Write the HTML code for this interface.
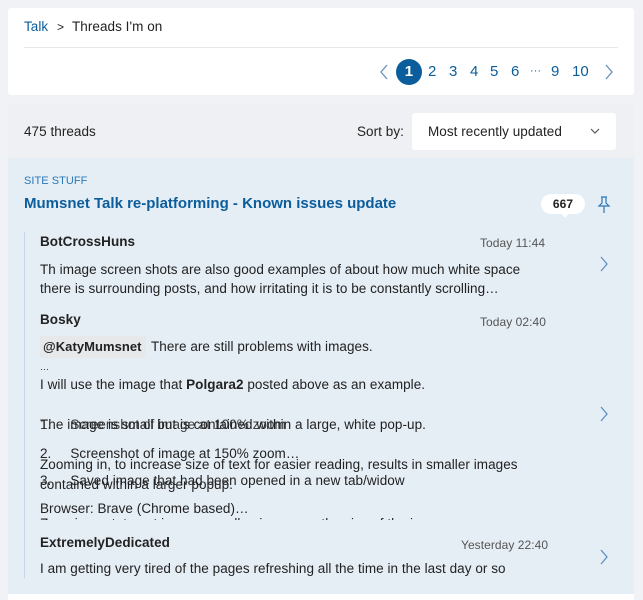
<!DOCTYPE html>
<html><head><meta charset="utf-8"><style>
*{margin:0;padding:0;box-sizing:border-box}
body{width:643px;height:600px;overflow:hidden;background:#f0f2f5;font-family:"Liberation Sans",sans-serif;color:#222;position:relative;font-size:13.5px;letter-spacing:0.05px}
.a{position:absolute;white-space:nowrap;line-height:16px}
.card1{position:absolute;left:8px;top:8px;width:626px;height:87px;background:#fff;border-radius:3px}
.card2{position:absolute;left:8px;top:104px;width:626px;height:496px;background:#eef0f3;border-radius:3px}
.blue{position:absolute;left:8px;top:158px;width:626px;height:436px;background:#e5edf5}
.bot{position:absolute;left:8px;top:594px;width:626px;height:6px;background:#fff}
.pg{color:#0b5e9b;font-size:15px;top:64px}
.b{font-weight:bold}
.t{color:#555;font-size:12px}
</style></head><body>
<div class="card1"></div>
<div class="a" style="left:24px;top:19px;color:#0b5e9b">Talk</div>
<div class="a" style="left:57px;top:19px;font-size:12px">&gt;</div>
<div class="a" style="left:72px;top:19px">Threads I'm on</div>
<div style="position:absolute;left:24px;top:47px;width:594px;height:1px;background:#e6e8eb"></div>
<svg style="position:absolute;left:378px;top:64px" width="12" height="16"><path d="M9 1 L3 8 L9 15" fill="none" stroke="#6a8fb5" stroke-width="1.3"/></svg>
<div style="position:absolute;left:396px;top:59px;width:26px;height:26px;border-radius:50%;background:#0b5e9b;color:#fff;font-size:15px;font-weight:bold;text-align:center;line-height:26px">1</div>
<div class="a pg" style="left:428px">2</div>
<div class="a pg" style="left:449px">3</div>
<div class="a pg" style="left:470px">4</div>
<div class="a pg" style="left:490px">5</div>
<div class="a pg" style="left:511px">6</div>
<div class="a pg" style="left:530px;font-size:11px;top:63px">···</div>
<div class="a pg" style="left:551px">9</div>
<div class="a pg" style="left:572px">10</div>
<svg style="position:absolute;left:603px;top:64px" width="12" height="16"><path d="M3 1 L9 8 L3 15" fill="none" stroke="#6a8fb5" stroke-width="1.3"/></svg>
<div class="card2"></div>
<div class="a" style="left:24px;top:124px">475 threads</div>
<div class="a" style="left:357px;top:124px">Sort by:</div>
<div style="position:absolute;left:412px;top:113px;width:204px;height:37px;background:#fff;border-radius:3px"></div>
<div class="a" style="left:428px;top:124px">Most recently updated</div>
<svg style="position:absolute;left:590px;top:128px" width="10" height="7"><path d="M1 1 L5 5 L9 1" fill="none" stroke="#555" stroke-width="1.2"/></svg>
<div class="blue"></div>
<div class="bot"></div>
<div class="a" style="left:24px;top:173px;color:#2a79b8;font-size:11px">SITE STUFF</div>
<div class="a b" style="left:24px;top:196px;color:#0b5e9b;font-size:15px;letter-spacing:0">Mumsnet Talk re-platforming - Known issues update</div>
<div style="position:absolute;left:541px;top:194px;width:44px;height:20px;background:#fff;border-radius:10px;font-size:12px;font-weight:bold;text-align:center;line-height:20px">667</div>
<div style="position:absolute;left:561px;top:213px;width:0;height:0;border-left:4px solid transparent;border-right:4px solid transparent;border-top:5px solid #fff"></div>
<svg style="position:absolute;left:597px;top:196px" width="14" height="18"><path d="M4 1 H10 M5 1 V7 L2 10 H12 L9 7 V1 M7 10 V17" fill="none" stroke="#2a79b8" stroke-width="1.2"/></svg>
<div style="position:absolute;left:24px;top:232px;width:1px;height:346px;background:#c6d6e6"></div>
<div class="a b" style="left:40px;top:234px">BotCrossHuns</div>
<div class="a t" style="left:480px;top:235px">Today 11:44</div>
<div class="a" style="left:40px;top:260px;line-height:19px">Th image screen shots are also good examples of about how much white space<br>there is surrounding posts, and how irritating it is to be constantly scrolling…</div>
<svg style="position:absolute;left:599px;top:256px" width="10" height="16"><path d="M2 1 L8 8 L2 15" fill="none" stroke="#5d91c4" stroke-width="1.3"/></svg>
<div class="a b" style="left:40px;top:312px">Bosky</div>
<div class="a t" style="left:480px;top:314px">Today 02:40</div>
<div style="position:absolute;left:40px;top:336px;width:106px;height:22px;background:#e6e8ea;border-radius:2px"></div>
<div class="a b" style="left:43px;top:339px;font-size:13px">@KatyMumsnet</div>
<div class="a" style="left:151px;top:339px">There are still problems with images.</div>
<div class="a" style="left:40px;top:359px;font-size:9px">…</div>
<div class="a" style="left:40px;top:377px">I will use the image that <b>Polgara2</b> posted above as an example.</div>
<div style="position:absolute;left:40px;top:410px;width:520px;height:110px;overflow:hidden">
<div class="a" style="left:0;top:7px">The image is small but is contained within a large, white pop-up.</div>
<div class="a" style="left:0;top:7px;opacity:.85">1.&nbsp;&nbsp;&nbsp;&nbsp;&nbsp;Screenshot of image at 100% zoom</div>
<div class="a" style="left:0;top:36px">2.&nbsp;&nbsp;&nbsp;&nbsp;&nbsp;Screenshot of image at 150% zoom…</div>
<div class="a" style="left:0;top:47px">Zooming in, to increase size of text for easier reading, results in smaller images</div>
<div class="a" style="left:0;top:63px">3.&nbsp;&nbsp;&nbsp;&nbsp;&nbsp;Saved image that had been opened in a new tab/widow</div>
<div class="a" style="left:0;top:67px">contained within a larger popup.</div>
<div class="a" style="left:0;top:91px">Browser: Brave (Chrome based)…</div>
<div class="a" style="left:0;top:106px">Zooming out, to get images smaller, increases the size of the images</div>
</div>
<svg style="position:absolute;left:599px;top:406px" width="10" height="16"><path d="M2 1 L8 8 L2 15" fill="none" stroke="#5d91c4" stroke-width="1.3"/></svg>
<div class="a b" style="left:40px;top:535px">ExtremelyDedicated</div>
<div class="a t" style="left:461px;top:537px">Yesterday 22:40</div>
<div class="a" style="left:40px;top:561px">I am getting very tired of the pages refreshing all the time in the last day or so</div>
<svg style="position:absolute;left:599px;top:549px" width="10" height="16"><path d="M2 1 L8 8 L2 15" fill="none" stroke="#5d91c4" stroke-width="1.3"/></svg>
</body></html>
